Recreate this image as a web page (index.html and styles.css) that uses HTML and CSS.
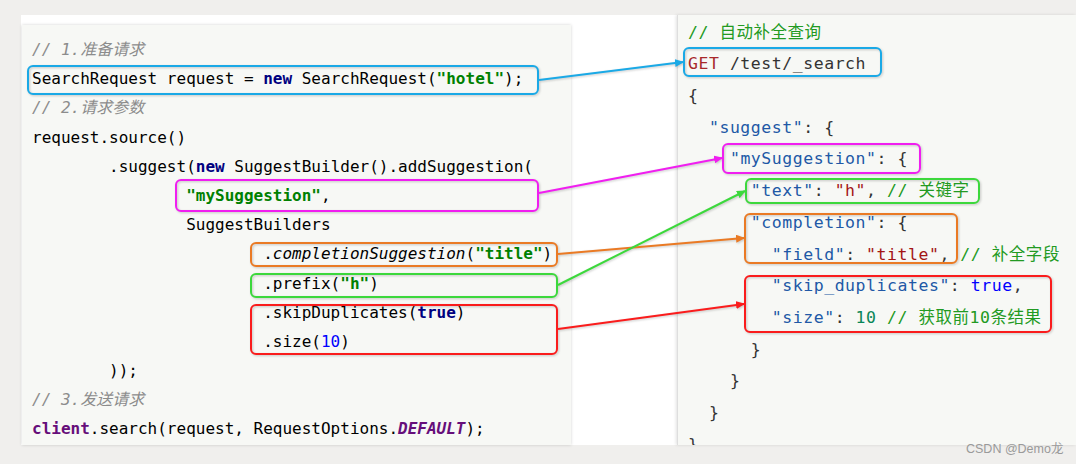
FILE: index.html
```html
<!DOCTYPE html>
<html lang="zh-CN">
<head>
    <meta charset="UTF-8">
    <title>自动补全查询</title>
    <link rel="stylesheet" href="styles.css">
</head>
<body>
<div class="stage">
    <div class="canvas">
        <div class="code java">
            <div class="ln"><span class="cm">// 1.准备请求</span></div>
            <div class="ln">SearchRequest request = <span class="kw">new</span> SearchRequest(<span class="st">"hotel"</span>);</div>
            <div class="ln"><span class="cm">// 2.请求参数</span></div>
            <div class="ln">request.source()</div>
            <div class="ln">        .suggest(<span class="kw">new</span> SuggestBuilder().addSuggestion(</div>
            <div class="ln">                <span class="st">"mySuggestion"</span>,</div>
            <div class="ln">                SuggestBuilders</div>
            <div class="ln">                        .<span class="it">completionSuggestion</span>(<span class="st">"title"</span>)</div>
            <div class="ln">                        .prefix(<span class="st">"h"</span>)</div>
            <div class="ln">                        .skipDuplicates(<span class="kw">true</span>)</div>
            <div class="ln">                        .size(<span class="nu">10</span>)</div>
            <div class="ln">        ));</div>
            <div class="ln"><span class="cm">// 3.发送请求</span></div>
            <div class="ln"><span class="fd">client</span>.search(request, RequestOptions.<span class="fd it">DEFAULT</span>);</div>
        </div>
        <div class="spacer"></div>
        <div class="code dsl">
            <div class="ln"><span class="cg">// 自动补全查询</span></div>
            <div class="ln"><span class="mt">GET</span> /test/_search</div>
            <div class="ln">{</div>
            <div class="ln">  <span class="ky">"suggest"</span>: {</div>
            <div class="ln">    <span class="ky">"mySuggestion"</span>: {</div>
            <div class="ln">      <span class="ky">"text"</span>: <span class="sv">"h"</span>, <span class="cg">// 关键字</span></div>
            <div class="ln">      <span class="ky">"completion"</span>: {</div>
            <div class="ln">        <span class="ky">"field"</span>: <span class="sv">"title"</span>, <span class="cg">// 补全字段</span></div>
            <div class="ln">        <span class="ky">"skip_duplicates"</span>: <span class="bl">true</span>,</div>
            <div class="ln">        <span class="ky">"size"</span>: <span class="nv">10</span> <span class="cg">// 获取前10条结果</span></div>
            <div class="ln">      }</div>
            <div class="ln">    }</div>
            <div class="ln">  }</div>
            <div class="ln">}</div>
        </div>
    </div>
</div>

<!-- 标注框和箭头 -->
<svg class="marks" width="1076" height="464" viewBox="0 0 1076 464">
    <defs>
        <marker id="ah-blue" markerUnits="userSpaceOnUse" markerWidth="9" markerHeight="8" refX="8" refY="4" orient="auto"><path d="M0,0 L9,4 L0,8 z" fill="#1aa9e6"/></marker>
        <marker id="ah-pink" markerUnits="userSpaceOnUse" markerWidth="9" markerHeight="8" refX="8" refY="4" orient="auto"><path d="M0,0 L9,4 L0,8 z" fill="#f01ef0"/></marker>
        <marker id="ah-orange" markerUnits="userSpaceOnUse" markerWidth="9" markerHeight="8" refX="8" refY="4" orient="auto"><path d="M0,0 L9,4 L0,8 z" fill="#ea7a24"/></marker>
        <marker id="ah-green" markerUnits="userSpaceOnUse" markerWidth="9" markerHeight="8" refX="8" refY="4" orient="auto"><path d="M0,0 L9,4 L0,8 z" fill="#3cd83c"/></marker>
        <marker id="ah-red" markerUnits="userSpaceOnUse" markerWidth="9" markerHeight="8" refX="8" refY="4" orient="auto"><path d="M0,0 L9,4 L0,8 z" fill="#fa1c1c"/></marker>
    </defs>
    <g class="box blue">
        <rect x="28" y="66" width="510" height="28" rx="5"/>
        <rect x="684" y="48" width="197" height="28" rx="5"/>
        <line x1="539" y1="80" x2="683" y2="62" marker-end="url(#ah-blue)"/>
    </g>
    <g class="box pink">
        <rect x="176" y="180" width="362" height="31" rx="5"/>
        <rect x="723" y="144" width="197" height="29" rx="5"/>
        <line x1="539" y1="193" x2="722" y2="158" marker-end="url(#ah-pink)"/>
    </g>
    <g class="box orange">
        <rect x="251" y="243" width="306" height="23" rx="5"/>
        <rect x="745" y="214" width="212" height="49" rx="5"/>
        <line x1="558" y1="254" x2="744" y2="238" marker-end="url(#ah-orange)"/>
    </g>
    <g class="box green">
        <rect x="251" y="274" width="306" height="23" rx="5"/>
        <rect x="746" y="179" width="233" height="24" rx="5"/>
        <line x1="558" y1="285" x2="745" y2="191" marker-end="url(#ah-green)"/>
    </g>
    <g class="box red">
        <rect x="251" y="305" width="306" height="49" rx="5"/>
        <rect x="745" y="276" width="306" height="56" rx="5"/>
        <line x1="558" y1="329" x2="744" y2="304" marker-end="url(#ah-red)"/>
    </g>
</svg>

<div class="watermark">CSDN @Demo龙</div>
</body>
</html>
```

FILE: styles.css
```css
body {
    margin: 0;
    width: 1076px;
    height: 464px;
    overflow: hidden;
    position: relative;
    background-color: #f0efed;
    font-family: "DejaVu Sans Mono", "Noto Sans CJK SC", monospace;
}
.stage {
    padding-top: 15px;
}
.canvas {
    display: flex;
    height: 430px;
    margin-left: 21px;
    background-color: #fff;
}
.code {
    box-sizing: border-box;
    background-color: #f7f8f5;
    overflow: hidden;
}
.ln {
    white-space: pre;
}

/* 左侧 Java 代码 */
.java {
    width: 549px;
    margin: 10px 0 0 1px;
    padding: 10px 0 0 10px;
    font-size: 16px;
    color: #000;
    box-shadow: 0 0 3px rgba(0, 0, 0, 0.18);
}
.java .ln {
    height: 29.2px;
    line-height: 29.2px;
}
.cm {
    color: #8c8c8c;
    font-style: italic;
}
.kw {
    color: #000080;
    font-weight: bold;
}
.st {
    color: #008000;
    font-weight: bold;
}
.nu {
    color: #0000ff;
}
.fd {
    color: #660e7a;
    font-weight: bold;
}
.it {
    font-style: italic;
}

.spacer {
    width: 106px;
}

/* 右侧 DSL */
.dsl {
    flex: 1;
    padding: 1.7px 0 0 10px;
    border-left: 1px solid #dedede;
    box-shadow: -1px 0 3px rgba(0, 0, 0, 0.12);
    font-size: 16.5px;
    letter-spacing: 0.54px;
    color: #333;
}
.dsl .ln {
    height: 31.7px;
    line-height: 31.7px;
}
.cg { color: #229a22; }
.mt { color: #a8282a; }
.ky { color: #2158a6; }
.sv { color: #a31515; }
.bl { color: #0000ff; }
.nv { color: #098658; }

/* 标注 */
.marks {
    position: absolute;
    left: 0;
    top: 0;
    pointer-events: none;
    filter: drop-shadow(1px 1px 1px rgba(0, 0, 0, 0.2));
}
.box rect {
    fill: none;
    stroke-width: 2;
}
.box line {
    stroke-width: 2;
}
.blue rect, .blue line { stroke: #1aa9e6; }
.pink rect, .pink line { stroke: #f01ef0; }
.orange rect, .orange line { stroke: #ea7a24; }
.green rect, .green line { stroke: #3cd83c; }
.red rect, .red line { stroke: #fa1c1c; }

.watermark {
    position: absolute;
    left: 966px;
    top: 442px;
    font-family: "Liberation Sans", "Noto Sans CJK SC", sans-serif;
    font-size: 12.5px;
    line-height: 14px;
    color: #9a9a9a;
}
```
